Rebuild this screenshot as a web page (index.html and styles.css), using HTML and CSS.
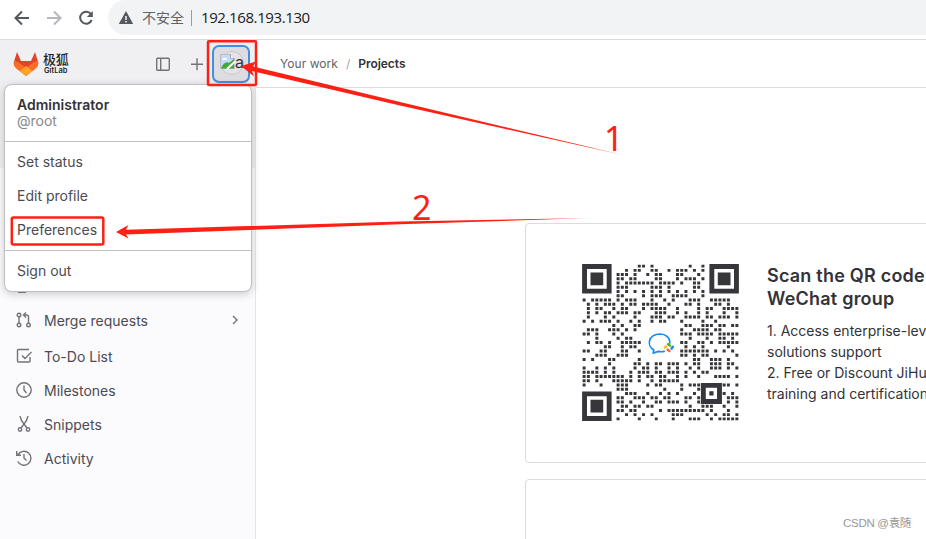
FILE: index.html
```html
<!DOCTYPE html>
<html lang="en">
<head>
<meta charset="utf-8">
<title>Projects</title>
<link rel="stylesheet" href="styles.css">
</head>
<body>
<header class="browser">
  <svg class="nav" width="108" height="39" viewBox="0 0 108 39" fill="none" stroke-width="2">
    <path d="M29 18H16M22 11.5L15.5 18L22 24.500" stroke="#55585c"/>
    <path d="M47 18H60M54 11.5L60.500 18L54 24.500" stroke="#b5b7ba"/>
    <path d="M91 14.200A6 6 0 1 0 91.700 20" stroke="#55585c"/><path d="M92.800 11V17H86.800Z" fill="#55585c"/>
  </svg>
  <div class="address">
    <svg width="16" height="16" viewBox="0 0 16 16"><path d="M8 1L15.200 14H.8Z" fill="#55585c"/><path d="M8 6v4M8 11v1.500" stroke="#fff" stroke-width="1.400"/></svg>
    <span class="unsafe">不安全</span><i class="bar"></i><span class="url">192.168.193.130</span>
  </div>
</header>
<div class="page">
  <aside class="sidebar">
    <div class="brand">
      <svg class="fox" width="26" height="26" viewBox="0 0 26 26"><path d="M4 1L1 10.500Q0 14 3 17L13 25L23 17Q26 14 25 10.500L22 1L18 10H8Z" fill="#e24329"/><path d="M1 10Q5 10 13 17L6.500 20L3 17Q0 14 1 10ZM25 10Q21 10 13 17L19.500 20L23 17Q26 14 25 10Z" fill="#fc6d26"/><path d="M6.500 20L13 15L19.500 20L13 25Z" fill="#fca326"/></svg>
      <div class="brand-name"><b>极狐</b><strong>GitLab</strong></div>
      <svg class="tools" width="52" height="20" viewBox="0 0 52 20" fill="none" stroke="#737278" stroke-width="1.400"><rect x="1.700" y="4.200" width="12.600" height="12" rx="1"/><path d="M5.700 4v12M36 10.200h12M42 4.200v12"/></svg>
      <div class="avatar"><svg width="28" height="30" viewBox="0 0 28 30"><circle cx="14" cy="15" r="11.500" fill="#e4e3e8" stroke="#c9c8ce"/><path d="M2.500 6.500h10l4 4V20.500h-14Z" fill="#c4dafc" stroke="#b4b4b8" stroke-width=".8"/><path d="M3 20.500C5 15 9 13 11 15L16 11V20.500Z" fill="#43a832"/><path d="M12.500 6.500v4h4" fill="#fff" stroke="#999" stroke-width=".8"/><path d="M9 21L17 13.500" stroke="#fff" stroke-width="2"/><path d="M4 12q0-2 2-2 3-1 3 2Z" fill="#fff"/></svg><span>a</span></div>
    </div>
    <nav class="menu">
      <div class="item"><svg width="16" height="16" viewBox="0 0 16 16"><circle cx="3" cy="3" r="1.800"/><circle cx="3" cy="13" r="1.800"/><circle cx="12.500" cy="13" r="1.800"/><path d="M3 5v6M12.500 11V5Q12.500 3 10.500 3H8M10 .5L7.500 3L10 5.500"/></svg><span>Merge requests</span><svg class="chev" width="8" height="10" viewBox="0 0 8 10"><path d="M2 1l4 4-4 4"/></svg></div>
      <div class="item todo"><svg width="16" height="16" viewBox="0 0 16 16"><path d="M13 1.500H2.500Q1.500 1.500 1.500 2.500V13Q1.500 14 2.500 14H13Q14 14 14 13V9M6 7.500L9 10.500L15.500 4"/></svg><span>To-Do List</span></div>
      <div class="item"><svg width="16" height="16" viewBox="0 0 16 16"><circle cx="8" cy="8" r="7.200"/><path d="M8 3.500V8l2.500 3"/></svg><span>Milestones</span></div>
      <div class="item"><svg width="16" height="16" viewBox="0 0 16 16"><circle cx="4" cy="13.500" r="1.700"/><circle cx="12" cy="13.500" r="1.700"/><path d="M4 0Q5 5 8 8L11 12M12 0Q11 5 8 8L5 12"/></svg><span>Snippets</span></div>
      <div class="item"><svg width="16" height="16" viewBox="0 0 16 16"><path d="M2 4.500A7 7 0 1 1 1.700 11.500M.7 1v4.300H5M8 4v4l2.500 2.500"/></svg><span>Activity</span></div>
    </nav>
  </aside>
  <main class="main">
    <div class="crumbs"><span>Your work</span><i>/</i><b>Projects</b></div>
    <section class="card first">
      <svg class="qr" width="157" height="157" viewBox="0 0 37 37">
        <path id="modules" fill="#37373b"/>
        <path fill="none" stroke="#37373b" stroke-width="1.150" d="M.6.6h5.800v5.800H.6ZM30.600.6h5.800v5.800h-5.800ZM.6 30.600h5.800v5.800H.6ZM28.600 28.600h3.800v3.800h-3.800Z"/>
        <path fill="#37373b" d="M2 2h3v3H2ZM32 2h3v3h-3ZM2 32h3v3H2ZM30 30h1v1h-1Z"/>
        <path d="M20.700 18.800C20.800 17.200 19.600 16.500 18.400 16.500C15.400 16.600 15.300 19.400 16.900 20.200L16.800 21L18 20.600Q18.900 20.800 19.500 20.500" fill="none" stroke="#168cf3" stroke-width=".4"/>
        <g stroke-width=".6" stroke-linecap="round"><path d="M20.300 18.900l.4.300" stroke="#4bb51f"/><path d="M21.400 19.500l-.3.400" stroke="#1687ed"/><path d="M20.600 20.500l-.4-.3" stroke="#f76530"/><path d="M19.500 19.700l.3-.3" stroke="#fbbc16"/></g>
      </svg>
      <div class="copy"><h2>Scan the QR code<br>WeChat group</h2><p>1. Access enterprise-level<br>solutions support<br>2. Free or Discount JiHu<br>training and certification</p></div>
    </section>
    <section class="card second"></section>
  </main>
</div>
<div class="dropdown">
  <div class="user"><b>Administrator</b><span>@root</span></div>
  <div class="group"><span>Set status</span><span>Edit profile</span><span>Preferences</span></div>
  <div class="out"><span>Sign out</span></div>
</div>
<svg class="notes" width="926" height="539" viewBox="0 0 926 539">
  <defs>
    <linearGradient id="fade1" gradientUnits="userSpaceOnUse" x1="240" y1="0" x2="626" y2="0"><stop offset=".9" stop-color="#ff2015"/><stop offset="1" stop-color="#ff2015" stop-opacity=".5"/></linearGradient>
    <linearGradient id="fade2" gradientUnits="userSpaceOnUse" x1="116" y1="0" x2="590" y2="0"><stop offset=".9" stop-color="#ff2015"/><stop offset="1" stop-color="#ff2015" stop-opacity=".5"/></linearGradient>
  </defs>
  <path d="M18 292.500h8" stroke="#737278"/>
  <g fill="none" stroke="#ff2015" stroke-width="2.500"><rect x="208" y="41.300" width="48" height="43.700" rx="1"/><rect x="11.800" y="217.500" width="91.500" height="27" rx="1.500"/></g>
  <path fill="url(#fade1)" d="M241 66L256 61.500L253 66.500L400 102L626 155.800L400 105.500L252 71L254 76.500Z"/>
  <path fill="url(#fade2)" d="M116 232L128.500 225L126 229.800L400 221.500L590 218L400 224.300L126 234.500L128.500 238.500Z"/>
</svg>
<span class="num one">1</span><span class="num two">2</span>
<span class="credit">CSDN @袁随</span>
<script src="script.js"></script>
</body>
</html>
```
FILE: styles.css
```css
*{box-sizing:border-box}
body{margin:0;width:926px;height:539px;overflow:hidden;position:relative;background:#fff;font-family:Inter,"Noto Sans CJK SC",sans-serif;color:#333238}
svg{display:block;flex:none}
.browser{height:40px;display:flex;border-bottom:1px solid #d9dbdf}
.address{flex:1;height:35px;background:#f1f3f4;border-radius:18px 0 0 18px;display:flex;align-items:center;padding-left:10px;font:15px "Open Sans","Noto Sans CJK SC",sans-serif;white-space:nowrap}
.unsafe{margin-left:8px;color:#5f6368;font-size:14px;line-height:20px;margin-top:-2px;font-family:"Noto Sans CJK SC",sans-serif;font-weight:400;width:43px}
.bar{width:1px;height:16px;background:#9a9da1;margin:0 9px 0 6px}
.url{color:#202124;letter-spacing:-.4px;margin-top:-2px}
.page{display:flex;height:499px}
.sidebar{width:256px;flex:none;border-right:1px solid #e4e4e8;background:linear-gradient(#f0f0f3 128px,#fbfafd 128px)}
.brand{height:48px;display:flex;align-items:center;padding-left:13px}
.brand-name{display:flex;flex-direction:column;margin-left:4px;width:31px;color:#252529}
.brand-name b{font:500 13px/14px "Noto Sans CJK SC",sans-serif;letter-spacing:-.3px;margin-top:-1px}
.brand-name strong{font-size:7.500px;line-height:9px;font-weight:600;margin-left:1px}
.tools{margin-left:81px}
.avatar{width:38px;height:38px;border:2px solid #428fdc;border-radius:7px;margin-left:5px;background:#dddce1;display:flex;padding:1px 4px;overflow:hidden;color:#333}
.avatar span{margin-left:-11px;font-size:16px;line-height:28px}
.menu{padding-top:215px}
.item{height:34px;display:flex;align-items:center;padding:0 16px;font-size:14px;color:#4c4b51}
.item svg{fill:none;stroke:#737278;stroke-width:1.400}
.item span{margin-left:12px}
.item .chev{margin-left:auto}
.todo{margin-top:2px}
.main{flex:1;min-width:0;overflow:hidden}
.crumbs{height:48px;border-bottom:1px solid #dcdcde;display:flex;align-items:center;padding-left:24px;font-size:12px;color:#626168;letter-spacing:.05px}
.crumbs i{margin:0 8px;color:#a4a3a8;font-style:normal}
.crumbs b{color:#333238;font-weight:600;letter-spacing:-.05px}
.card{margin-left:269px;width:500px;border:1px solid #dcdcde;border-radius:4px}
.first{height:240px;margin-top:135px;display:flex;padding:40px 0 0 55.500px;gap:28.500px}
.second{height:120px;margin-top:16px}
.copy{white-space:nowrap}
h2{font-size:18px;line-height:23px;font-weight:600;letter-spacing:.22px;margin:0 0 10px}
p{font-size:14px;line-height:21px;margin:0}
.dropdown{position:absolute;left:4px;top:84px;width:248px;height:208px;background:#fff;border:1px solid #bfbfc3;border-radius:8px;box-shadow:0 2px 8px #0003;font-size:14px;color:#4c4b51}
.user{height:57px;border-bottom:1px solid #bfbfc3;padding:12px;display:flex;flex-direction:column;line-height:16px}
.user b{font-weight:600;color:#333238}
.user span{color:#89888d}
.group{height:109px;border-bottom:1px solid #bfbfc3;padding:3px 12px;display:flex;flex-direction:column;line-height:34px}
.out{padding:3px 12px;line-height:34px}
.notes{position:absolute;left:0;top:0}
.num{position:absolute;color:#ff2015;font:34px/40px "Noto Sans",sans-serif}
.one{left:604px;top:118px}
.two{left:412px;top:187px}
.credit{position:absolute;left:843px;top:515px;font:11.500px/17px "Liberation Sans","Noto Sans CJK SC",sans-serif;letter-spacing:-.3px;color:#98989b;white-space:nowrap}
```
FILE: script.js
```javascript
// Dark columns of each row of the code, without the corner markers.
const rows = [
  [13,14,16,25,28],
  [10,12,13,16,17,20,22,23,24,26,28],
  [8,9,10,12,15,17,18,22,23,27],
  [8,9,11,12,17,18,22,24,25,26,28],
  [8,10,11,12,13,14,15,16,18,19,20,21,23,26,27],
  [8,9,10,16,17,18,20,26,27],
  [8,10,12,14,16,18,20,22,24,26,28],
  [8,9,14,16,17,18,21,22,23,24,28],
  [0,2,3,4,5,6,8,10,11,12,16,19,21,25,26,27,30,31,32,33,34],
  [1,3,5,6,7,9,11,12,14,15,16,17,20,24,25,27,31,32,34],
  [1,3,4,7,9,10,14,16,17,18,19,22,27,29,30,33,34,35,36],
  [1,3,5,6,8,9,10,12,13,17,18,19,22,24,27,29,33,36],
  [1,5,7,12,16,17,18,20,21,24,25,26,27,29,30,32,33,34,36],
  [0,2,4,5,6,8,11,13,16,18,19,23,28,31],
  [7,9,12,13,24,25,28,29,30,32,33,35,36],
  [1,2,3,6,7,8,10,12,23,26,27,28,29,31,32],
  [0,1,3,7,9,23,24,25,27,28,29,30,32,33,34,35,36],
  [3,8,10,11,25,29,32,33,35],
  [1,3,4,6,9,10,11,12,13,23,24,27,28,30,32,33,34,35,36],
  [5,6,9,11,12,24,26,28,34],
  [0,1,4,5,9,10,13,23,24,25,26,27,28,29,31,33,35],
  [3,4,5,8,9,10,23,24,26,28,29,36],
  [0,2,6,7,13,26,27,30,31,32,34],
  [6,12,13,15,17,18,20,21,22,24,26,27,30,31,32,34,35],
  [0,3,5,7,12,14,15,17,20,22,25,27,30,31,32,34,36],
  [0,1,2,3,5,7,11,13,14,15,17,18,20,21,22,24,26,28,29],
  [0,1,3,4,5,6,7,8,9,11,13,15,16,18,19,22,24,27,31,32,33,34,36],
  [0,1,3,7,8,9,10,11,13,16,18,19,20,21,22],
  [0,4,8,9,10,15,17,18,23,25,26,27,33,34,36],
  [8,9,10,19,23,27],
  [10,11,12,15,18,20,22,26,33,35],
  [8,9,12,13,14,16,17,19,20,24,25,27,34,35,36],
  [8,9,11,14,17,18,20,21,22,24,27,34,36],
  [9,10,12,13,15,16,25,28,29,30,33,36],
  [8,9,11,12,18,20,21,22,23,24,25,26,27,28,30,34],
  [10,12,14,16,21,22,23,29,31,33,34,36],
  [8,13,17,21,25,26,27,30,32,33,34,35,36]
];
document.getElementById('modules').setAttribute('d',
  rows.map((cols, y) => cols.map(x => `M${x + .15} ${y + .15}h.7v.7h-.7Z`).join('')).join(''));
```
